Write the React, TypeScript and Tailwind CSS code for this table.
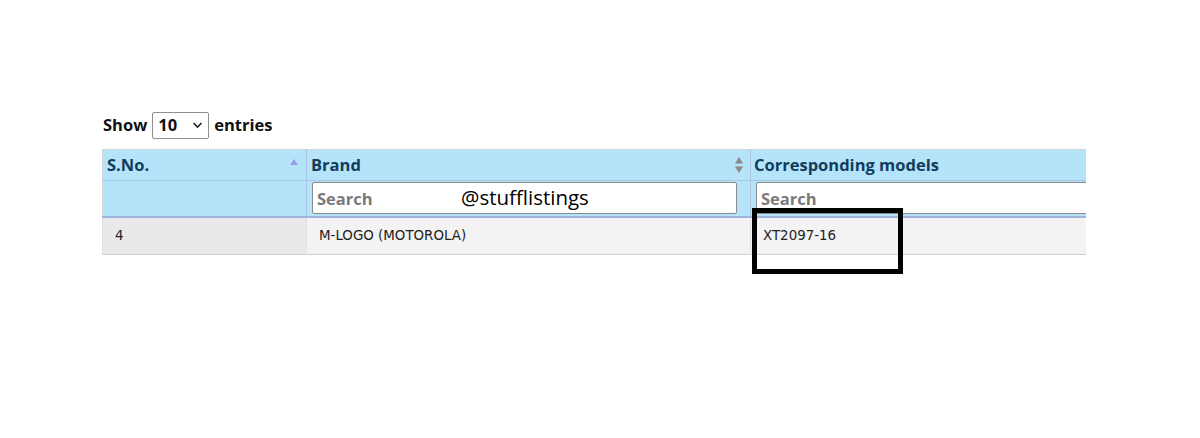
import React from "react";

const SortUp = () => (
  <svg width="10" height="10" viewBox="0 0 10 10" className="shrink-0">
    <path d="M5 2 L9 8 L1 8 Z" fill="#9b9be8" />
  </svg>
);

const SortBoth = () => (
  <svg width="10" height="18" viewBox="0 0 10 18" className="shrink-0">
    <path d="M5 1 L9 7.5 L1 7.5 Z" fill="#8a8a8a" />
    <path d="M5 17 L9 10.5 L1 10.5 Z" fill="#8a8a8a" />
  </svg>
);

export default function App() {
  return (
    <div className="relative w-[1200px] h-[438px] bg-white" style={{ fontFamily: "'Open Sans', sans-serif" }}>
      <div className="pt-[111px] pl-[102px]">
        <div className="flex items-center h-[28px] text-[16.5px] font-bold text-[#111]">
          <span className="pl-px">Show</span>
          <div className="ml-[5px] flex items-center justify-between w-[57px] h-[27px] border border-[#8f8f8f] rounded-[2px] px-[5px]">
            <span>10</span>
            <svg width="11" height="8" viewBox="0 0 11 8">
              <path d="M1.5 2 L5.5 6 L9.5 2" stroke="#222" strokeWidth="1.6" fill="none" />
            </svg>
          </div>
          <span className="ml-[5px]">entries</span>
        </div>

        <div className="mt-[10px] w-[984px] overflow-hidden">
          <table className="border-collapse w-[1100px] table-fixed">
            <colgroup>
              <col className="w-[204px]" />
              <col className="w-[444px]" />
              <col />
            </colgroup>
            <thead>
              <tr className="h-[31px] bg-[#b5e3fa] text-[#123c5c] text-[16.5px] font-bold">
                <th className="border border-[#a9c6e2] border-t-[#cfd6dc] border-l-[#cfd6dc] text-left pl-[4px] pr-[7px]">
                  <div className="flex items-center justify-between">
                    <span>S.No.</span>
                    <span className="-mt-[7px]"><SortUp /></span>
                  </div>
                </th>
                <th className="border border-[#a9c6e2] border-t-[#cfd6dc] text-left pl-[4px] pr-[6px]">
                  <div className="flex items-center justify-between">
                    <span>Brand</span>
                    <SortBoth />
                  </div>
                </th>
                <th className="border border-[#a9c6e2] border-t-[#cfd6dc] text-left pl-[3px]">
                  <span>Corresponding models</span>
                </th>
              </tr>
              <tr className="h-[36px] bg-[#b5e3fa]">
                <th className="border border-[#a9c6e2] border-l-[#cfd6dc] border-b-[#9fb3dc] border-b-2"></th>
                <th className="border border-[#a9c6e2] border-b-[#9fb3dc] border-b-2 pl-[5px] pr-[13px] py-[1px]">
                  <input
                    placeholder="Search"
                    className="w-full h-[32px] bg-white border border-[#8a8a8a] rounded-[2px] px-[4px] text-[16.5px] font-bold placeholder:text-[#7a7a7a] outline-none"
                  />
                </th>
                <th className="border border-[#a9c6e2] border-b-[#9fb3dc] border-b-2 pl-[5px] py-[1px]">
                  <input
                    placeholder="Search"
                    className="w-full h-[32px] bg-white border border-[#8a8a8a] rounded-[2px] px-[4px] text-[16.5px] font-bold placeholder:text-[#7a7a7a] outline-none"
                  />
                </th>
              </tr>
            </thead>
            <tbody style={{ fontFamily: "'DejaVu Sans', Verdana, sans-serif" }}>
              <tr className="h-[38px] text-[13.4px] text-[#222] border-b border-[#cfcfcf]">
                <td className="bg-[#e9e9e9] pl-[12px] border-l border-[#dedede]">4</td>
                <td className="bg-[#f3f3f3] pl-[12px] border-l border-[#e2e2e2]">M-LOGO (MOTOROLA)</td>
                <td className="bg-[#f3f3f3] pl-[12px] border-l border-[#e2e2e2]">XT2097-16</td>
              </tr>
            </tbody>
          </table>
        </div>
      </div>

      <div className="absolute left-[455px] top-[183px] w-[255px] h-[29px] bg-white flex items-center pl-[6px] text-[20.5px] text-black" style={{ fontFamily: "'Open Sans', sans-serif" }}>
        @stufflistings
      </div>
      <div className="absolute left-[752px] top-[208px] w-[151px] h-[66px] border-[5px] border-black"></div>
    </div>
  );
}
